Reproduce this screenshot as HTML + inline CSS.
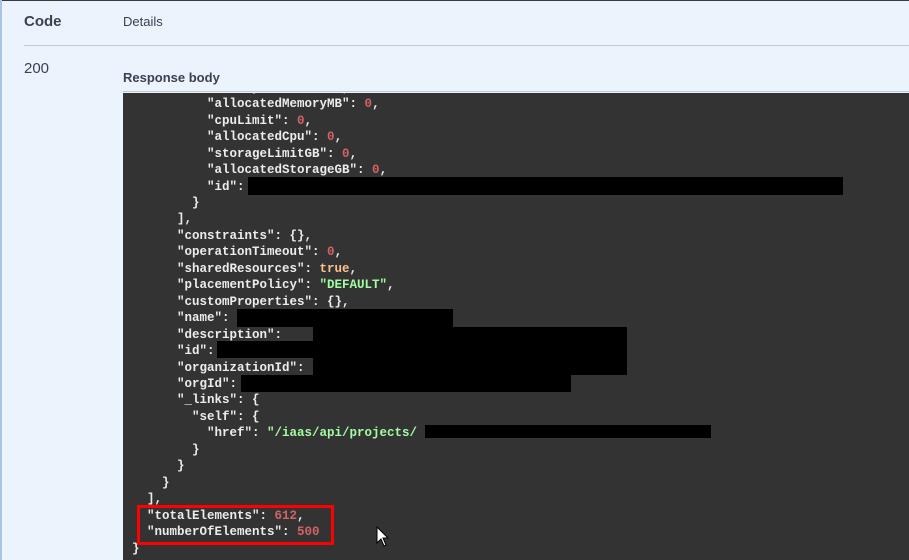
<!DOCTYPE html>
<html><head><meta charset="utf-8"><style>
html,body{margin:0;padding:0;width:909px;height:560px;overflow:hidden;background:#ebf3fc;font-family:"Liberation Sans",Arial,sans-serif;position:relative}
.a{position:absolute}
.code{position:absolute;left:123px;top:93px;width:786px;height:467px;background:#333;overflow:hidden}
pre{position:absolute;left:9px;top:-13.2px;margin:0;font-family:"Liberation Mono",monospace;font-weight:bold;font-size:12.5px;line-height:16.45px;color:#ececec}
.n{color:#d36363}.s{color:#a2fca2}.b{color:#fcc28c}
.k{position:absolute;background:#000}
</style></head><body>
<div class="a" style="left:0;top:0;width:909px;height:1px;background:#3a3a3a"></div>
<div class="a" style="left:0;top:0;width:2px;height:560px;background:#a9c4e4"></div>
<div class="a" style="left:24px;top:13px;font-weight:bold;font-size:15px;color:#3b4151">Code</div>
<div class="a" style="left:123px;top:14px;font-size:13px;color:#3b4151">Details</div>
<div class="a" style="left:24px;top:45px;width:885px;height:1px;background:#c3c9d1"></div>
<div class="a" style="left:24px;top:60px;font-size:15px;color:#3b4151">200</div>
<div class="a" style="left:123px;top:70px;font-weight:bold;font-size:13px;color:#3b4151">Response body</div>
<div class="a" style="left:123px;top:91px;width:786px;height:1px;background:#c3c9d1"></div>
<div class="code"><pre>          "memoryLimitMB": <span class="n">0</span>,
          "allocatedMemoryMB": <span class="n">0</span>,
          "cpuLimit": <span class="n">0</span>,
          "allocatedCpu": <span class="n">0</span>,
          "storageLimitGB": <span class="n">0</span>,
          "allocatedStorageGB": <span class="n">0</span>,
          "id":
        }
      ],
      "constraints": {},
      "operationTimeout": <span class="n">0</span>,
      "sharedResources": <span class="b">true</span>,
      "placementPolicy": <span class="s">"DEFAULT"</span>,
      "customProperties": {},
      "name":
      "description":
      "id":
      "organizationId":
      "orgId":
      "_links": {
        "self": {
          "href": <span class="s">"/iaas/api/projects/</span>
        }
      }
    }
  ],
  "totalElements": <span class="n">612</span>,
  "numberOfElements": <span class="n">500</span>
}</pre>
<div class="k" style="left:125px;top:84px;width:595px;height:18px"></div>
<div class="k" style="left:114px;top:216px;width:216px;height:18px"></div>
<div class="k" style="left:190px;top:234px;width:314px;height:48px"></div>
<div class="k" style="left:94px;top:248px;width:100px;height:17px"></div>
<div class="k" style="left:118px;top:282px;width:330px;height:17px"></div>
<div class="k" style="left:302px;top:332px;width:286px;height:13px"></div>
</div>
<div class="a" style="left:137px;top:505px;width:191px;height:34px;border:3px solid #f00"></div>
<svg class="a" style="left:376px;top:526px" width="14" height="22" viewBox="0 0 14 22"><path d="M1 1 L1 17 L5 13 L8 20 L10 19 L7 12 L12 12 Z" fill="#fff" stroke="#000" stroke-width="1"/></svg>
</body></html>
